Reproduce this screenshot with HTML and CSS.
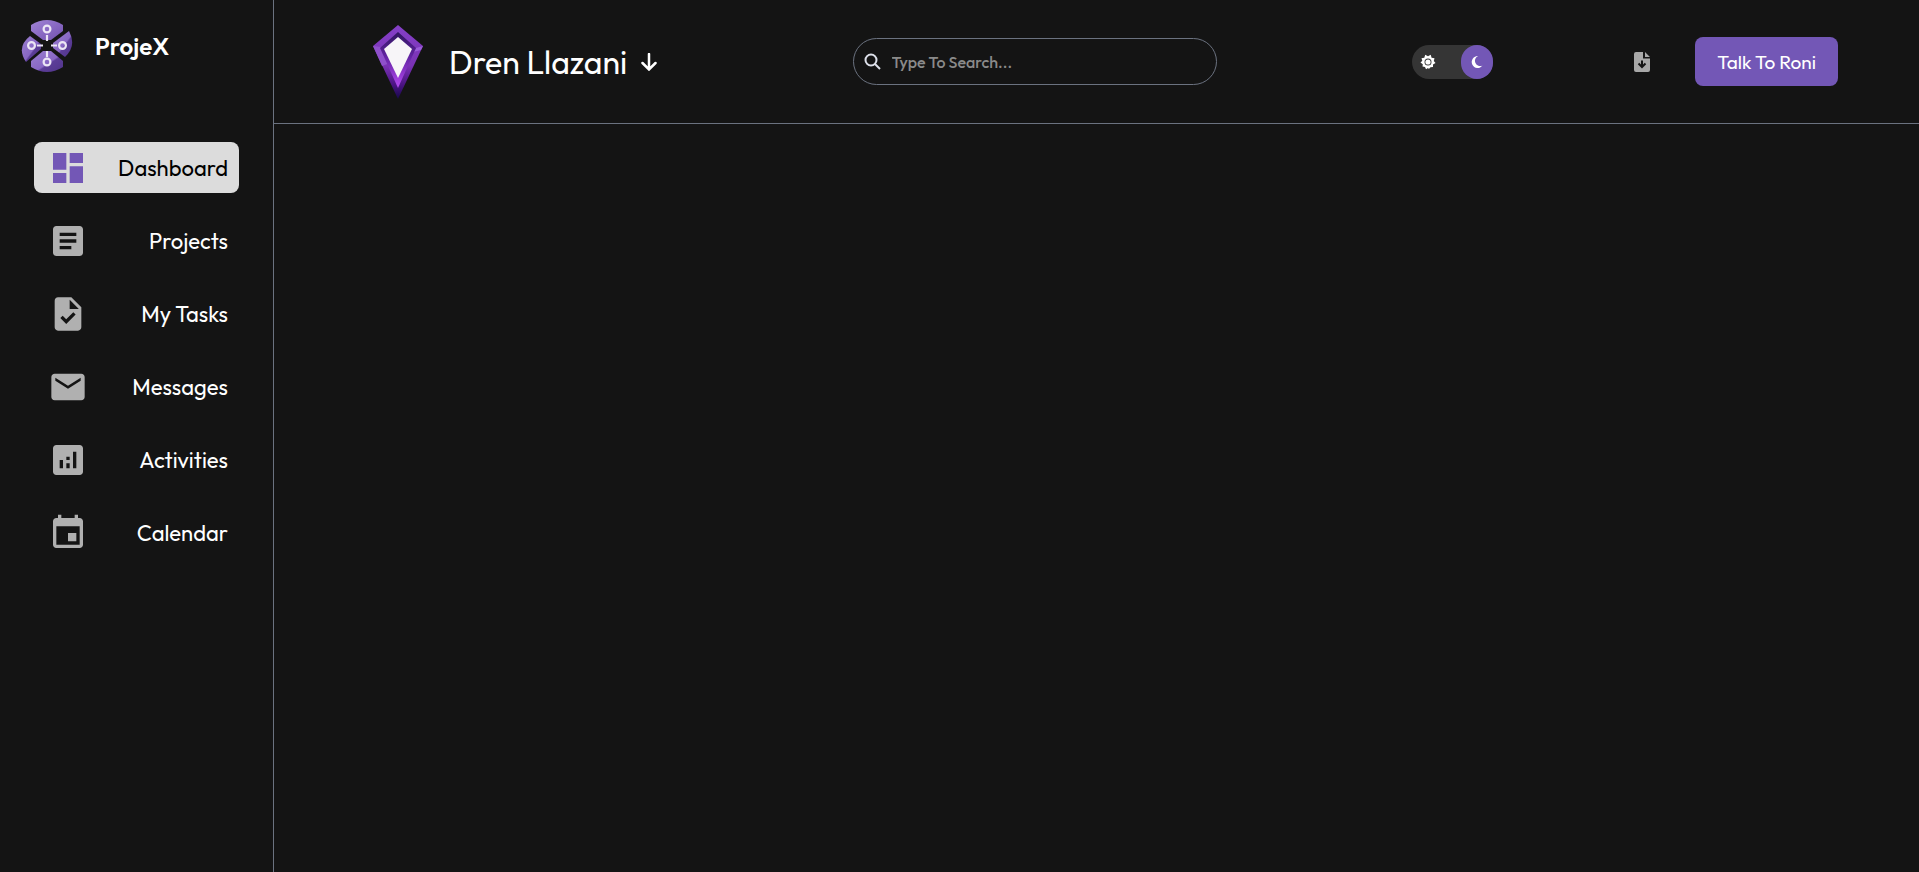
FILE: index.html
```html
<!DOCTYPE html>
<html lang="en">
<head>
<meta charset="utf-8">
<meta name="viewport" content="width=device-width, initial-scale=1">
<title>ProjeX</title>
<link rel="stylesheet" href="styles.css">
</head>
<body>
<div class="app">
  <aside class="sidebar">
    <a class="brand" href="#">
      <svg class="brand-logo" viewBox="0 0 52 54" aria-hidden="true">
        <defs>
          <linearGradient id="petal" x1="0" y1="0" x2="1" y2="1"><stop offset="0" stop-color="#9b7fd0"/><stop offset=".55" stop-color="#8867c4"/><stop offset=".6" stop-color="#5c3d98"/><stop offset="1" stop-color="#50348a"/></linearGradient>
          <linearGradient id="petal-top" x1="0" y1="0" x2="1" y2="1"><stop offset="0" stop-color="#a184d6"/><stop offset="1" stop-color="#7250b0"/></linearGradient>
        </defs>
        <path fill="url(#petal-top)" d="M10 6Q26-4 42 6V12L30 21H22L10 12Z"/>
        <path fill="url(#petal)" d="M10 48Q26 58 42 48V42L30 32H22L10 42Z"/>
        <path fill="url(#petal)" d="M5 43Q-5 28 9 17L20 25V30Z"/>
        <path fill="url(#petal)" d="M48 12Q56 27 44 38L32 29V24Z"/>
        <g fill="none" stroke="#ece6f5" stroke-width="2.200"><circle cx="26" cy="10" r="3.400"/><circle cx="26" cy="43" r="3.400"/><circle cx="10.500" cy="26.500" r="3.400"/><circle cx="41.500" cy="26.500" r="3.400"/><path d="M26 16v6M26 32v6M16 26.500h6M30 26.500h6"/></g>
      </svg>
      <span>ProjeX</span>
    </a>
    <nav class="menu">
      <a class="item active" href="#"><svg viewBox="0 0 24 24" aria-hidden="true"><path d="M3 13h8V3H3v10zm0 8h8v-6H3v6zm10 0h8V11h-8v10zm0-18v6h8V3h-8z"/></svg><span>Dashboard</span></a>
      <a class="item" href="#"><svg viewBox="0 0 24 24" aria-hidden="true"><path d="M19 3H5c-1.100 0-2 .9-2 2v14c0 1.100.9 2 2 2h14c1.100 0 2-.9 2-2V5c0-1.100-.9-2-2-2zm-5 14H7v-2h7v2zm3-4H7v-2h10v2zm0-4H7V7h10v2z"/></svg><span>Projects</span></a>
      <a class="item" href="#"><svg viewBox="0 0 24 24" aria-hidden="true"><path d="M14 2H6c-1.100 0-1.990.9-1.990 2L4 20c0 1.100.89 2 1.990 2H18c1.100 0 2-.9 2-2V8l-6-6zm-3.060 16L7.400 14.460l1.410-1.410 2.120 2.120 4.240-4.240 1.410 1.410L10.940 18zM13 9V3.500L18.500 9H13z"/></svg><span>My Tasks</span></a>
      <a class="item" href="#"><svg viewBox="0 0 24 24" aria-hidden="true"><path d="M20 4H4c-1.100 0-1.990.9-1.990 2L2 18c0 1.100.9 2 2 2h16c1.100 0 2-.9 2-2V6c0-1.100-.9-2-2-2zm-.4 4.250l-7.600 4.750-7.600-4.750V6.500L12 11.200l7.600-4.700v1.750z"/></svg><span>Messages</span></a>
      <a class="item" href="#"><svg viewBox="0 0 24 24" aria-hidden="true"><path d="M19 3H5c-1.100 0-2 .9-2 2v14c0 1.100.9 2 2 2h14c1.100 0 2-.9 2-2V5c0-1.100-.9-2-2-2zM9 17H7v-5h2v5zm4 0h-2v-3h2v3zm0-5h-2v-2h2v2zm4 5h-2V7h2v10z"/></svg><span>Activities</span></a>
      <a class="item" href="#"><svg viewBox="0 0 24 24" aria-hidden="true"><path d="M19 3h-1V1h-2v2H8V1H6v2H5c-1.110 0-2 .9-2 2v14c0 1.100.89 2 2 2h14c1.100 0 2-.9 2-2V5c0-1.100-.9-2-2-2zm0 16H5V8h14v11zm-7-7h5v5h-5z"/></svg><span>Calendar</span></a>
    </nav>
  </aside>
  <div class="page">
    <header class="topbar">
      <button class="user" type="button">
        <svg class="gem" viewBox="0 0 50 74" aria-hidden="true">
          <defs>
            <linearGradient id="gem-edge" x1="0" y1="0" x2="0" y2="1"><stop offset="0" stop-color="#8540c8"/><stop offset=".55" stop-color="#7a32b4"/><stop offset=".8" stop-color="#4c1484"/><stop offset="1" stop-color="#16084a"/></linearGradient>
            <linearGradient id="gem-inner" x1="0" y1="0" x2="0" y2="1"><stop offset="0" stop-color="#2f1560"/><stop offset=".45" stop-color="#6424a4"/><stop offset="1" stop-color="#b54af2"/></linearGradient>
          </defs>
          <path fill="url(#gem-edge)" d="M25 0L50 21 25 74 0 21Z"/>
          <path fill="#9a5bd8" d="M50 21L43 23 40 27 48 25Z"/>
          <path fill="#8f50cb" d="M0 21L9 41 17 38 8 22Z"/>
          <path fill="url(#gem-inner)" d="M25 7L43 23 25 63 7 23Z"/>
          <path fill="#f7f5f8" d="M25 12L39 24 25 53 11 24Z"/>
        </svg>
        <span>Dren Llazani</span>
        <svg class="arrow" viewBox="0 0 16 18" aria-hidden="true"><path d="M8 1v15M1.500 10L8 16.500 14.500 10"/></svg>
      </button>
      <label class="search">
        <svg viewBox="0 0 18 18" aria-hidden="true"><circle cx="7" cy="7" r="5.500"/><path d="M11 11l5 5"/></svg>
        <input type="search" placeholder="Type To Search..." aria-label="Search">
      </label>
      <label class="theme">
        <input type="checkbox" role="switch" aria-label="Dark mode" checked>
        <svg class="sun" viewBox="0 0 16 16" aria-hidden="true"><path fill="#fff" fill-rule="evenodd" d="M8 2.300L10.700 .8 11.600 3.700 14.500 4.300 13.800 7 15.500 9 13 10.500 13 13 10.500 13.200 8.900 15 8 14 6 15.200 5 13 2.500 12.600 2.800 10.300 .5 8.500 2.300 6.800 1.500 4.300 4.300 3.700 5.200 .8ZM8 4.500a3.500 3.500 0 1 0 0 7 3.500 3.500 0 0 0 0-7Z"/><circle cx="8" cy="8" r="2.600" fill="#fff"/></svg>
        <span class="knob"><svg viewBox="0 0 12 12" aria-hidden="true"><path fill="#fff" d="M7 0A6 6 0 1 0 11.500 9.600 5 5 0 0 1 7 0Z"/></svg></span>
      </label>
      <div class="actions">
        <button class="download" type="button" aria-label="Download">
          <svg viewBox="0 0 16 20" aria-hidden="true"><path fill="#a8a8a8" d="M2 0H9V6.500H16V18a2 2 0 0 1-2 2H2a2 2 0 0 1-2-2V2A2 2 0 0 1 2 0ZM11 0L16 5H11Z"/><path fill="none" stroke="#141414" stroke-width="2" d="M8 8.500v6M4.500 11.500L8 15l3.500-3.500"/></svg>
        </button>
        <button class="talk" type="button">Talk To Roni</button>
      </div>
    </header>
    <main class="content"></main>
  </div>
</div>
</body>
</html>
```

FILE: styles.css
```css
* { box-sizing: border-box; }
body {
  margin: 0;
  background: #141414;
  color: #fff;
  font-family: Outfit, Lato, "Liberation Sans", sans-serif;
}
svg { display: block; flex: none; }
a { color: inherit; text-decoration: none; }
button, input { font: inherit; color: inherit; }
button { border: 0; background: none; padding: 0; cursor: pointer; }

.app { display: flex; min-height: 100vh; }

.sidebar { flex: none; width: 274px; border-right: 1px solid #6b7280; }
.brand {
  display: flex;
  align-items: center;
  gap: 22px;
  height: 92px;
  padding: 0 21px;
  font-size: 24px;
  font-weight: 600;
}
.brand-logo { width: 52px; height: 54px; }
.menu {
  display: flex;
  flex-direction: column;
  gap: 22px;
  padding: 50px 34px;
}
.item {
  display: flex;
  align-items: center;
  justify-content: space-between;
  min-height: 51px;
  padding: 0 11px 0 14px;
  border-radius: 8px;
  font-size: 22px;
}
.item svg { width: 40px; height: 40px; fill: #b0b0b0; }
.item.active { background: #dcdcdc; color: #000; }
.item.active svg { fill: #7357b6; }

.page { flex: 1; min-width: 0; }
.topbar {
  display: flex;
  align-items: center;
  justify-content: space-between;
  min-height: 124px;
  padding: 0 81px 0 99px;
  border-bottom: 1px solid #6b7280;
}
.user { display: flex; align-items: center; font-size: 32px; }
.gem { width: 50px; height: 74px; margin-right: 26px; }
.arrow {
  width: 16px;
  height: 18px;
  margin-left: 14px;
  fill: none;
  stroke: #fff;
  stroke-width: 2.5;
  stroke-linecap: round;
}
.search {
  display: flex;
  align-items: center;
  gap: 10px;
  width: 364px;
  height: 47px;
  padding: 0 16px 0 10px;
  border: 1px solid #6b7280;
  border-radius: 24px;
  font-size: 16px;
  font-weight: 500;
}
.search svg { width: 18px; height: 18px; fill: none; stroke: #dde0ea; stroke-width: 2; }
.search input { flex: 1; min-width: 0; padding: 0; border: 0; outline: 0; background: none; }
.search input::placeholder { color: #8a8a8a; opacity: 1; }

.theme {
  display: flex;
  align-items: center;
  justify-content: space-between;
  width: 81px;
  height: 34px;
  padding-left: 8px;
  border-radius: 17px;
  background: #353535;
  cursor: pointer;
}
.theme input { position: absolute; opacity: 0; }
.sun { width: 16px; height: 16px; }
.knob {
  display: flex;
  align-items: center;
  justify-content: center;
  width: 32px;
  height: 34px;
  border-radius: 17px;
  background: #7357b6;
}
.knob svg { width: 12px; height: 12px; }

.actions { display: flex; align-items: center; gap: 45px; margin-left: -54px; }
.download svg { width: 16px; height: 20px; }
.talk {
  height: 49px;
  padding: 0 22px;
  border-radius: 8px;
  background: #7357b6;
  font-size: 19px;
}
```
